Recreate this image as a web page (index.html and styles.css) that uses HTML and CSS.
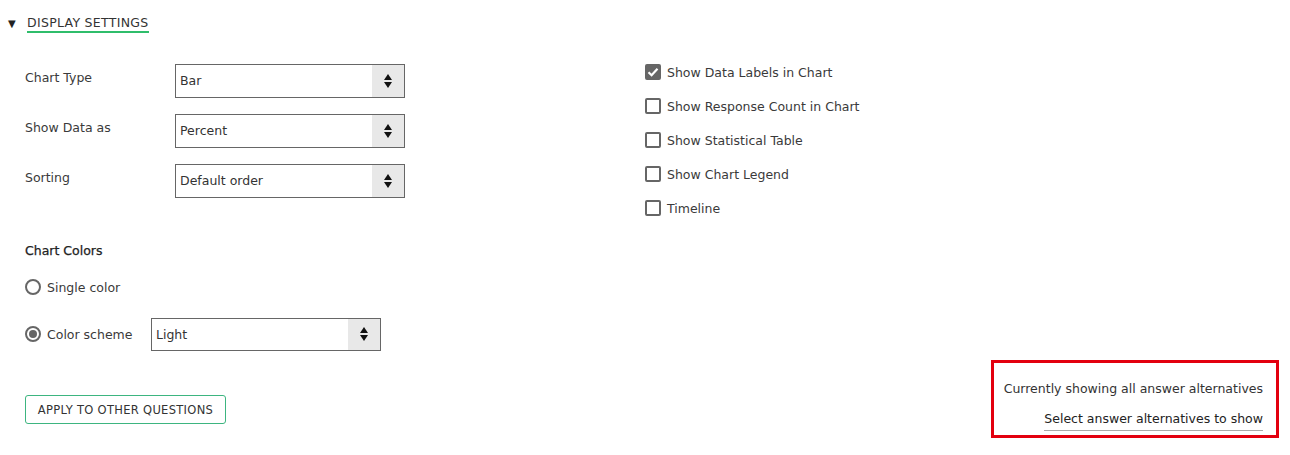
FILE: index.html
```html
<!DOCTYPE html>
<html>
<head>
<meta charset="utf-8">
<link rel="stylesheet" href="styles.css">
</head>
<body>
<div class="page">
  <div class="header">
    <span class="caret">▼</span>
    <span class="title">DISPLAY SETTINGS</span>
  </div>
  <div class="content">
    <div class="left">
      <div class="field">
        <span class="label">Chart Type</span>
        <div class="select"><span class="value">Bar</span><span class="arrows"><span class="up"></span><span class="down"></span></span></div>
      </div>
      <div class="field">
        <span class="label">Show Data as</span>
        <div class="select"><span class="value">Percent</span><span class="arrows"><span class="up"></span><span class="down"></span></span></div>
      </div>
      <div class="field">
        <span class="label">Sorting</span>
        <div class="select"><span class="value">Default order</span><span class="arrows"><span class="up"></span><span class="down"></span></span></div>
      </div>
      <div class="colors-title">Chart Colors</div>
      <div class="radio-row single">
        <span class="radio"></span><span class="radio-label">Single color</span>
      </div>
      <div class="radio-row scheme">
        <span class="radio checked"></span><span class="radio-label">Color scheme</span>
        <div class="select"><span class="value">Light</span><span class="arrows"><span class="up"></span><span class="down"></span></span></div>
      </div>
      <div class="apply">APPLY TO OTHER QUESTIONS</div>
    </div>
    <div class="right">
      <div class="checks">
        <div class="check-row"><span class="box checked"><svg viewBox="0 0 16 16" width="16" height="16"><path d="M3.5 8.2 L6.6 11.2 L12.5 4.8" fill="none" stroke="#fff" stroke-width="2.2"/></svg></span><span>Show Data Labels in Chart</span></div>
        <div class="check-row"><span class="box"></span><span>Show Response Count in Chart</span></div>
        <div class="check-row"><span class="box"></span><span>Show Statistical Table</span></div>
        <div class="check-row"><span class="box"></span><span>Show Chart Legend</span></div>
        <div class="check-row"><span class="box"></span><span>Timeline</span></div>
      </div>
      <div class="alt-box">
        <div class="alt-text">Currently showing all answer alternatives</div>
        <div class="alt-link">Select answer alternatives to show</div>
      </div>
    </div>
  </div>
</div>
</body>
</html>
```
FILE: styles.css
```css
* { box-sizing: border-box; }
html, body { margin: 0; padding: 0; background: #fff; }
body {
  font-family: "DejaVu Sans", "Open Sans", sans-serif;
  font-size: 12.5px;
  color: #3a3a3a;
  width: 1290px;
  height: 455px;
  overflow: hidden;
}
.page { padding: 13px 0 0 0; }
.header { display: flex; align-items: center; height: 20px; padding-left: 8px; }
.caret { font-size: 10px; color: #222; width: 19px; }
.title {
  font-size: 12.5px; color: #333; letter-spacing: 0.3px;
  border-bottom: 2px solid #2fbd6b; line-height: 16px; padding-top: 1px;
}
.content { display: flex; padding-top: 31px; }
.left { width: 620px; padding-left: 25px; display: flex; flex-direction: column; }
.field { display: flex; align-items: center; height: 34px; margin-bottom: 16px; }
.label { width: 150px; margin-top: -7px; }
.select {
  width: 230px; height: 34px; border: 1px solid #666; display: flex; background: #fff;
}
.select .value { flex: 1; padding-left: 4px; line-height: 32px; color: #333; }
.select .arrows {
  width: 32px; background: #e8e8e8; display: flex; flex-direction: column;
  align-items: center; justify-content: center; gap: 2px;
}
.up { width: 0; height: 0; border-left: 4px solid transparent; border-right: 4px solid transparent; border-bottom: 6px solid #111; }
.down { width: 0; height: 0; border-left: 4px solid transparent; border-right: 4px solid transparent; border-top: 6px solid #111; }
.colors-title { color: #222; -webkit-text-stroke: 0.25px #222; margin-top: 27px; height: 20px; line-height: 20px; }
.radio-row { display: flex; align-items: center; }
.radio-row.single { margin-top: 17px; height: 18px; }
.radio-row.scheme { margin-top: 21px; height: 34px; }
.radio {
  width: 16px; height: 16px; border: 2px solid #666; border-radius: 50%;
  display: inline-flex; align-items: center; justify-content: center; margin-right: 6px;
}
.radio.checked::after { content: ""; width: 8px; height: 8px; border-radius: 50%; background: #666; }
.radio-label { width: 104px; }
.radio-row .select { height: 33px; }
.apply {
  margin-top: 44px; align-self: flex-start; width: 201px; height: 29px;
  background: #fff; border: 1px solid #3db580; border-radius: 3px;
  display: flex; align-items: center; justify-content: center;
  font-size: 11.5px; color: #333; letter-spacing: 0.3px;
}
.right { flex: 1; display: flex; flex-direction: column; padding-left: 25px; }
.checks { display: flex; flex-direction: column; padding-top: 11px; }
.check-row { display: flex; align-items: center; height: 34px; }
.checks .check-row:first-child { margin-top: -20px; }
.box {
  width: 16px; height: 16px; border: 2px solid #666; border-radius: 2px; margin-right: 6px;
  display: inline-flex;
}
.box.checked { background: #666; border-color: #666; }
.box svg { margin: -2px; }
.alt-box {
  align-self: flex-end; margin-right: 11px; margin-top: 135px;
  width: 288px; height: 78px; border: 3px solid #e3000f;
  display: flex; flex-direction: column; align-items: flex-end; padding: 17px 13px 0 0;
}
.alt-text { line-height: 18px; color: #333; }
.alt-link { margin-top: 12px; line-height: 18px; color: #222; border-bottom: 1px solid #aaa; padding-bottom: 2px; }
```
